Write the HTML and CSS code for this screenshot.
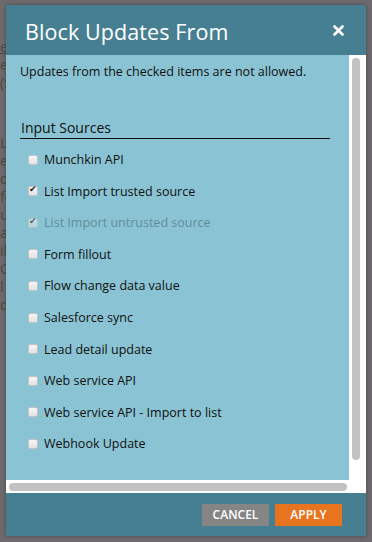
FILE: index.html
```html
<!DOCTYPE html>
<html lang="en">
<head>
    <meta charset="UTF-8">
    <title>Block Updates From</title>
    <link rel="stylesheet" href="styles.css">
</head>
<body>

<div class="page">
    <p class="under u1">e</p>
    <p class="under">e</p>
    <p class="under">(S</p>
    <p class="under gap">L</p>
    <p class="under">e</p>
    <p class="under">qu</p>
    <p class="under">fe</p>
    <p class="under">ur</p>
    <p class="under">a</p>
    <p class="under">ib</p>
    <p class="under">O</p>
    <p class="under">l</p>
    <p class="under">qu</p>
</div>

<div class="overlay">
    <div class="dialog">
        <div class="dialog-header">
            <h2>Block Updates From</h2>
            <svg class="close" width="11" height="11" viewBox="0 0 11 11">
                <path d="M1.5 1.5 L9.5 9.5 M9.5 1.5 L1.5 9.5" stroke="#fff" stroke-width="2.6" stroke-linecap="round"/>
            </svg>
        </div>

        <div class="dialog-body">
            <div class="scroll-area">
                <div class="content">
                    <p class="intro">Updates from the checked items are not allowed.</p>

                    <h3>Input Sources</h3>
                    <ul class="sources">
                        <li><input type="checkbox"> Munchkin API</li>
                        <li><input type="checkbox" checked> List Import trusted source</li>
                        <li class="disabled"><input type="checkbox" checked disabled> List Import untrusted source</li>
                        <li><input type="checkbox"> Form fillout</li>
                        <li><input type="checkbox"> Flow change data value</li>
                        <li><input type="checkbox"> Salesforce sync</li>
                        <li><input type="checkbox"> Lead detail update</li>
                        <li><input type="checkbox"> Web service API</li>
                        <li><input type="checkbox"> Web service API - Import to list</li>
                        <li><input type="checkbox"> Webhook Update</li>
                    </ul>
                </div>
                <div class="vscroll"><div class="vthumb"></div></div>
            </div>
            <div class="hscroll"><div class="hthumb"></div></div>
        </div>

        <div class="dialog-footer">
            <button type="button" class="btn cancel">CANCEL</button>
            <button type="button" class="btn apply">APPLY</button>
        </div>
    </div>
</div>

</body>
</html>
```

FILE: styles.css
```css
html, body {
    margin: 0;
    padding: 0;
    height: 100%;
}
body {
    font-family: "Open Sans", "Noto Sans", sans-serif;
    background: #6c6a6c;
    overflow: hidden;
}
.page {
    padding: 38px 0 0 0;
}
.under {
    margin: 0;
    font-size: 14px;
    line-height: 18px;
    color: #4a4a4a;
}
.u1 {
    text-decoration: underline;
}
.gap {
    margin-top: 42px;
}
.overlay {
    position: absolute;
    top: 5px;
    left: 6px;
    width: 360px;
    height: 531px;
}
.dialog {
    display: flex;
    flex-direction: column;
    height: 100%;
    background: #477f92;
    box-shadow: 0 0 4px rgba(0,0,0,0.3);
}
.dialog-header {
    height: 50px;
    display: flex;
    align-items: center;
    justify-content: space-between;
    padding: 3px 22px 0 19px;
    box-sizing: border-box;
    flex: 0 0 auto;
}
.dialog-header h2 {
    margin: 0;
    color: #fff;
    font-size: 21.5px;
    font-weight: 400;
    letter-spacing: 0.1px;
}
.close {
    display: block;
    margin-top: -3px;
}
.dialog-body {
    flex: 0 0 438px;
    display: flex;
    flex-direction: column;
    background: #fff;
}
.scroll-area {
    flex: 1;
    display: flex;
    min-height: 0;
}
.content {
    flex: 1;
    background: #8ac3d3;
    padding: 9px 19px 0 14px;
    color: #111;
}
.intro {
    margin: 0;
    font-size: 12.5px;
    line-height: 16px;
}
h3 {
    margin: 38px 0 0 0;
    padding: 0 0 1px 1px;
    font-size: 14px;
    font-weight: 400;
    line-height: 19px;
    border-bottom: 1px solid #111;
}
.sources {
    list-style: none;
    margin: 5px 0 0 0;
    padding: 0 0 0 8px;
}
.sources li {
    display: flex;
    align-items: center;
    height: 31.55px;
    font-size: 12.5px;
}
.sources input {
    appearance: none;
    -webkit-appearance: none;
    position: relative;
    box-sizing: border-box;
    width: 10px;
    height: 10px;
    margin: 0 6px 0 0;
    border: 1px solid #c4c4c4;
    border-radius: 2px;
    background: linear-gradient(#f6f6f6, #e2e2e2);
}
.sources input:checked::after {
    content: "\2714";
    position: absolute;
    left: 0;
    top: -3px;
    font-size: 9px;
    color: #222;
}
.sources li.disabled {
    color: #5f8e9a;
}
.sources li.disabled input {
    opacity: 0.55;
}
.vscroll {
    flex: 0 0 14px;
    background: #fff;
    padding: 3px 0 0 3px;
}
.vthumb {
    width: 8px;
    height: 402px;
    border-radius: 4px;
    background: #c2c2c2;
}
.hscroll {
    height: 13px;
    padding: 3px 0 0 3px;
    box-sizing: border-box;
}
.hthumb {
    width: 338px;
    height: 8px;
    border-radius: 4px;
    background: #c2c2c2;
}
.dialog-footer {
    flex: 1;
    display: flex;
    justify-content: flex-end;
    align-items: center;
    gap: 6px;
    padding: 0 24px 0 0;
}
.btn {
    height: 22px;
    padding: 0 10px;
    border: none;
    color: #fff;
    font-family: "Open Sans", "Noto Sans", sans-serif;
    font-size: 12px;
    font-weight: 600;
    cursor: pointer;
}
.cancel {
    width: 67px;
    background: #858585;
}
.apply {
    width: 67px;
    background: #e8741f;
}
```
